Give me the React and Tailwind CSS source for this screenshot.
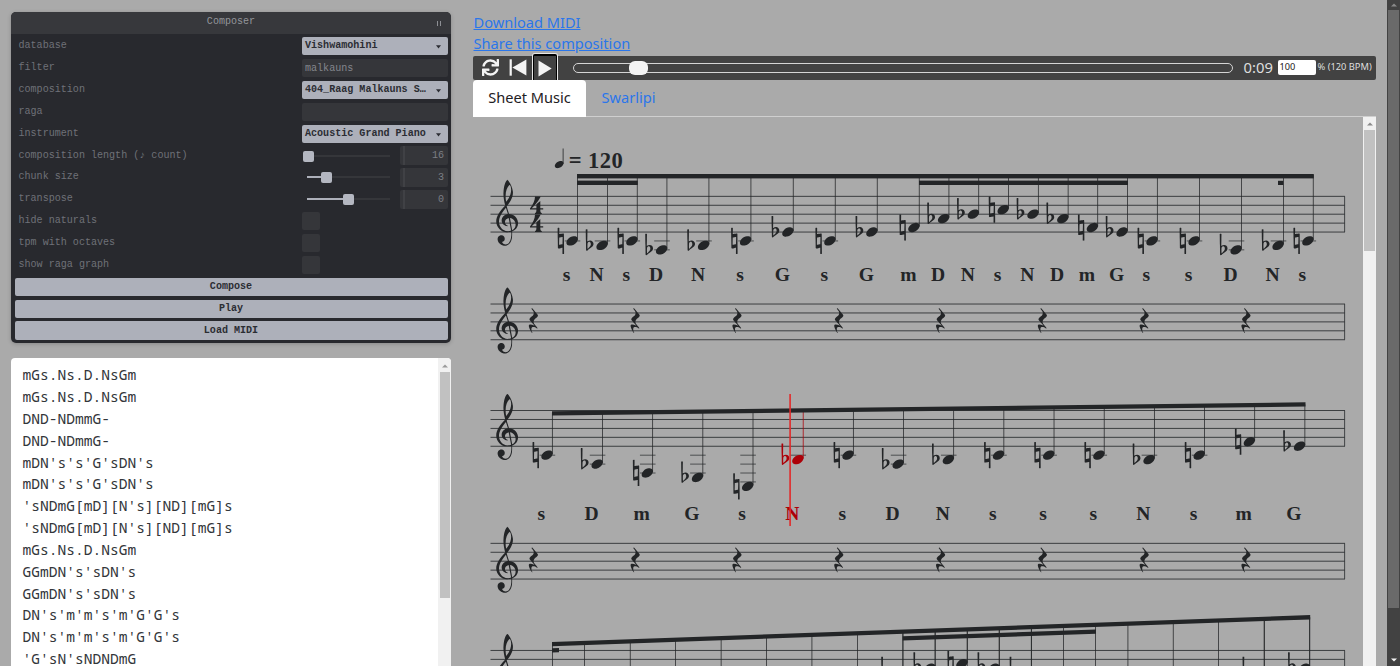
import React from 'react';
import { FaSync } from 'react-icons/fa';

const INK = '#232527';
const LINE = '#36393b';
const GAP = 8.93;

const CLEF =
  'M9.69 -37.41c0.09 -0.09 0.24 -0.06 0.36 0c0.12 0.09 0.57 0.6 0.96 1.11c1.77 2.34 3.21 5.85 3.57 8.73c0.21 1.56 0.03 3.27 -0.45 4.86c-0.69 2.31 -1.92 4.47 -4.23 7.44c-0.3 0.39 -0.57 0.72 -0.6 0.75c-0.03 0.06 0 0.15 0.18 0.78c0.54 1.68 1.38 4.44 1.68 5.49l0.09 0.42l0.39 0c1.47 0.09 2.76 0.51 3.96 1.29c1.83 1.23 3.06 3.21 3.39 5.52c0.09 0.45 0.12 1.29 0.06 1.74c-0.09 1.02 -0.33 1.83 -0.75 2.73c-0.84 1.71 -2.28 3.06 -4.02 3.72l-0.33 0.12l0.03 1.26c0 1.74 -0.06 3.63 -0.21 4.62c-0.45 3.06 -2.19 5.49 -4.47 6.21c-0.57 0.18 -0.9 0.21 -1.59 0.21c-0.69 0 -1.02 -0.03 -1.65 -0.21c-1.14 -0.27 -2.13 -0.84 -2.94 -1.65c-0.99 -0.99 -1.56 -2.16 -1.71 -3.54c-0.09 -0.81 0.06 -1.53 0.45 -2.13c0.63 -0.99 1.83 -1.56 3 -1.53c1.5 0.09 2.64 1.32 2.73 2.94c0.06 1.47 -0.93 2.7 -2.37 2.97' +
  'C6.5 18.8 8.5 18.9 10 18.2C12 17 13 14 13.2 11C13.3 10 13.3 8.5 13.2 7.5C11.5 8 8 8.1 5.5 7C2 5.3 0.2 1.8 0.2 -1.5C0.2 -6 3.5 -10.5 8 -15.3C7 -19 6.2 -23 6.5 -27C6.8 -32 8 -36 9.69 -37.41Z' +
  'M11.6 -33C8.9 -30.6 7.5 -25 8.8 -18.4C11.5 -21.5 13.2 -25.5 13.1 -28.9C13 -31.4 12.5 -33 11.6 -33Z' +
  'M8.6 -13.3C5.3 -9.4 2.6 -5 2.6 -1.2C2.6 3 5.8 6.8 10 7C11.2 7 12.3 6.8 13.1 6.5L10.95 -4.3C8.7 -3.7 7.5 -2 7.8 -0.3C8.2 1 9 1.9 10.3 2.4L9.9 2.8C7.3 2.4 5 0.5 4.9 -2C4.9 -5 7.1 -7.2 10.3 -7.8Z' +
  'M14 6.1C15.8 5.3 17 3.6 17 1.5C17 -1.5 15 -4.1 12.1 -4.4Z';
const HEAD =
  'M6.09 -4.05c0.36 -0.03 1.2 0 1.53 0.06c1.17 0.24 1.89 0.84 2.16 1.83c0.06 0.18 0.06 0.3 0.06 0.66c0 0.45 0 0.63 -0.15 1.08c-0.66 2.04 -3.06 3.93 -5.52 4.38c-0.54 0.09 -1.44 0.09 -1.83 0.03c-1.23 -0.27 -1.98 -0.87 -2.25 -1.86c-0.06 -0.18 -0.06 -0.3 -0.06 -0.66c0 -0.45 0 -0.63 0.15 -1.08c0.24 -0.78 0.75 -1.53 1.44 -2.22c1.2 -1.2 2.85 -2.01 4.47 -2.22z';
const REST =
  'M1.89 -11.82c0.12 -0.06 0.24 -0.06 0.36 -0.03c0.09 0.06 4.74 5.58 4.86 5.82c0.21 0.39 0.15 0.78 -0.15 1.26c-0.24 0.33 -0.72 0.81 -1.62 1.56c-0.45 0.36 -0.87 0.75 -0.96 0.84c-0.93 0.99 -1.14 2.49 -0.6 3.63c0.18 0.39 0.27 0.48 1.32 1.68c1.92 2.25 1.83 2.16 1.83 2.34c0 0.18 -0.18 0.36 -0.36 0.39c-0.15 0 -0.27 -0.06 -0.48 -0.27c-0.75 -0.75 -2.46 -1.29 -3.39 -1.08c-0.45 0.09 -0.69 0.27 -0.9 0.69c-0.12 0.3 -0.21 0.66 -0.24 1.14c-0.03 0.66 0.09 1.35 0.3 2.01c0.15 0.42 0.24 0.66 0.45 0.96c0.18 0.24 0.18 0.33 0.03 0.42c-0.12 0.06 -0.18 0.03 -0.45 -0.3c-1.08 -1.38 -2.07 -3.36 -2.4 -4.83c-0.27 -1.05 -0.15 -1.77 0.27 -2.07c0.21 -0.12 0.42 -0.15 0.87 -0.15c0.87 0.06 2.1 0.39 3.3 0.9l0.39 0.18l-1.65 -1.95c-2.52 -2.97 -2.61 -3.09 -2.7 -3.27c-0.09 -0.24 -0.12 -0.48 -0.03 -0.75c0.15 -0.48 0.57 -0.96 1.83 -2.01c0.45 -0.36 0.84 -0.72 0.93 -0.78c0.69 -0.75 1.02 -1.8 0.9 -2.79c-0.06 -0.33 -0.21 -0.84 -0.39 -1.11c-0.09 -0.15 -0.45 -0.6 -0.81 -1.05c-0.36 -0.42 -0.69 -0.81 -0.72 -0.87c-0.09 -0.18 0 -0.42 0.21 -0.51z';
const FLAT =
  'M-0.36 -14.07c0.33 -0.06 0.87 0 1.08 0.15c0.06 0.03 0.06 0.36 -0.03 5.25c-0.06 2.85 -0.09 5.19 -0.09 5.19c0 0.03 0.12 -0.03 0.24 -0.12c0.63 -0.42 1.41 -0.66 2.19 -0.72c0.81 -0.03 1.47 0.21 2.04 0.78c0.57 0.54 0.87 1.26 0.93 2.04c0.03 0.57 -0.09 1.08 -0.36 1.62c-0.42 0.81 -1.02 1.38 -2.82 2.61c-1.14 0.78 -1.44 1.02 -1.8 1.44c-0.18 0.18 -0.39 0.39 -0.45 0.42c-0.27 0.18 -0.57 0.15 -0.81 -0.06c-0.06 -0.09 -0.12 -0.18 -0.15 -0.27c-0.03 -0.06 -0.09 -3.27 -0.18 -8.34c-0.09 -4.53 -0.15 -8.58 -0.18 -9.03l0 -0.78l0.12 -0.06c0.06 -0.06 0.18 -0.09 0.27 -0.12zm3.18 11.01c-0.21 -0.12 -0.54 -0.15 -0.81 -0.06c-0.54 0.15 -0.99 0.63 -1.17 1.26c-0.06 0.3 -0.12 2.88 -0.06 3.87c0.03 0.42 0.03 0.81 0.06 0.9l0.03 0.12l0.45 -0.39c0.63 -0.54 1.26 -1.17 1.56 -1.59c0.3 -0.42 0.6 -0.99 0.72 -1.41c0.18 -0.69 0.09 -1.47 -0.18 -2.07c-0.15 -0.3 -0.33 -0.51 -0.6 -0.63z';
const NATURAL =
  'M0.2 -11.4c0.24 -0.06 0.78 0 0.99 0.15c0.03 0.03 0.03 0.48 0 2.61c-0.03 1.44 -0.03 2.61 -0.03 2.61c0 0.03 0.75 -0.09 1.68 -0.24c0.96 -0.18 1.71 -0.27 1.74 -0.27c0.15 0.03 0.27 0.15 0.36 0.3l0.06 0.12l0.09 8.67c0.09 6.96 0.12 8.67 0.09 8.67c-0.03 0.03 -0.12 0.06 -0.21 0.09c-0.24 0.09 -0.72 0.09 -0.96 0c-0.09 -0.03 -0.18 -0.06 -0.21 -0.09c-0.03 -0.03 -0.03 -0.48 0 -2.61c0.03 -1.44 0.03 -2.61 0.03 -2.61c0 -0.03 -0.75 0.09 -1.68 0.24c-0.96 0.18 -1.71 0.27 -1.74 0.27c-0.15 -0.03 -0.27 -0.15 -0.36 -0.3l-0.06 -0.15l-0.09 -7.53c-0.06 -4.14 -0.09 -8.04 -0.12 -8.67l0 -1.11l0.15 -0.06c0.09 -0.03 0.21 -0.06 0.27 -0.09zm3.75 8.4c0 -0.33 0 -0.42 -0.03 -0.42c-0.12 0 -2.79 0.45 -2.79 0.48c-0.03 0 -0.09 6.3 -0.09 6.33c0.03 0 2.79 -0.45 2.82 -0.48c0 0 0.09 -4.53 0.09 -5.91z';
const METER_FOUR =
  'M5 0L10.6 0L10.2 1C7.4 6 4.4 9 1.7 11.8L6.4 11.8L6.4 7.8L10.3 4.6L10.3 11.8L13.2 11.8L13.2 13L10.3 13C10.3 15.5 10.5 16.2 11.8 16.6L11.8 17.4L5 17.4L5 16.6C6.2 16.2 6.4 15.5 6.4 13L0 13L0 12C3 8 5 4 5 0Z';

// Steps are counted in half staff spaces downwards from the top line.
const PITCH = {
  C5: [3, 'n'], B4: [4, 'b'], A4: [5, 'b'], F4: [7, 'n'], E4: [8, 'b'],
  C4: [10, 'n'], B3: [11, 'b'], A3: [12, 'b'], F3: [14, 'n'], E3: [15, 'b'], C3: [17, 'n'],
};

function Staff({ top }) {
  return (
    <g>
      {[0, 1, 2, 3, 4].map((i) => (
        <rect key={i} x="490.5" y={top + i * GAP - 0.45} width="854.5" height="0.95" fill={LINE} />
      ))}
      <rect x="1344.2" y={top} width="0.9" height={GAP * 4} fill={LINE} />
      <path d={CLEF} fillRule="evenodd" fill={INK} transform={`translate(496 ${top + 3 * GAP}) scale(1.155)`} />
    </g>
  );
}

function Note({ x, top, pitch, beamY, label, labelY, color = INK }) {
  const [step, accidental] = PITCH[pitch];
  const y = top + (step * GAP) / 2;
  const ledgers = [];
  for (let s = 10; s <= step; s += 2) ledgers.push(top + (s * GAP) / 2);
  return (
    <g fill={color}>
      {ledgers.map((ly) => (
        <rect key={ly} x={x - 12.8} y={ly - 0.4} width="15.6" height="0.8" fill={LINE} />
      ))}
      <rect x={x - 0.45} y={beamY} width="0.75" height={y - beamY - 1} />
      <path d={HEAD} transform={`translate(${x - 11.1} ${y}) scale(1.155)`} />
      {accidental === 'b' ? (
        <path d={FLAT} transform={`translate(${x - 20.9} ${y}) scale(1.15 1.14)`} />
      ) : (
        <path d={NATURAL} transform={`translate(${x - 19.6} ${y}) scale(1.2 1.15)`} />
      )}
      {label && (
        <text x={x - 11} y={labelY} textAnchor="middle" fontSize="19.6" fontWeight="700" fontFamily="'Liberation Serif', serif">
          {label}
        </text>
      )}
    </g>
  );
}

const ROW_ONE = [
  [577.5, 'C4', 's'], [607.5, 'B3', 'N'], [637.3, 'C4', 's'], [667, 'A3', 'D'], [709, 'B3', 'N'], [751, 'C4', 's'],
  [793.3, 'E4', 'G'], [835.3, 'C4', 's'], [877.3, 'E4', 'G'], [919.3, 'F4', 'm'], [949, 'A4', 'D'], [978.8, 'B4', 'N'],
  [1008.6, 'C5', 's'], [1038.4, 'B4', 'N'], [1068.2, 'A4', 'D'], [1097.8, 'F4', 'm'], [1127.5, 'E4', 'G'],
  [1157.4, 'C4', 's'], [1199.5, 'C4', 's'], [1241.5, 'A3', 'D'], [1283.5, 'B3', 'N'], [1313.3, 'C4', 's'],
];
const ROW_THREE = [
  ['C4', 's'], ['A3', 'D'], ['F3', 'm'], ['E3', 'G'], ['C3', 's'], ['B3', 'N'], ['C4', 's'], ['A3', 'D'],
  ['B3', 'N'], ['C4', 's'], ['C4', 's'], ['C4', 's'], ['B3', 'N'], ['C4', 's'], ['F4', 'm'], ['E4', 'G'],
];
const ROW_FIVE_STEMS = [552.5, 584.7, 630.3, 675.7, 721.2, 766.6, 812, 857.5, 1063.7, 1095.7, 1128, 1173.3, 1218.7];
const ROW_FIVE_NOTES = [
  [903, 'A4'], [935.2, 'B4'], [967.3, 'C5'], [999.3, 'B4'], [1031.4, 'A4'], [1264.3, 'A4'], [1309.8, 'B4'],
];
const beamThree = (x) => 411.2 - (x - 552) * 0.0118;
const beamFive = (x) => 642 - (x - 552) * 0.0354;

function Rests({ y }) {
  return (
    <g fill={INK}>
      {[0, 1, 2, 3, 4, 5, 6, 7].map((i) => (
        <path key={i} d={REST} transform={`translate(${529.6 + i * 101.8} ${y}) scale(1.155)`} />
      ))}
    </g>
  );
}

function Score() {
  return (
    <svg className="block h-[549px] w-[890px] shrink-0" viewBox="473 117 890 549">
      <path d={HEAD} fill={INK} transform="translate(554.8 164.6) scale(0.88)" />
      <rect x="562.7" y="148.5" width="0.8" height="15.5" fill={INK} />
      <text x="568.8" y="168.2" fontSize="22.6" fontWeight="700" fill={INK} fontFamily="'Liberation Serif', serif" textLength="54" lengthAdjust="spacing">= 120</text>

      <Staff top={196.3} />
      <path d={METER_FOUR} fill={INK} transform="translate(530 196.5)" />
      <path d={METER_FOUR} fill={INK} transform="translate(530 214.5)" />
      {ROW_ONE.map(([x, pitch, label]) => (
        <Note key={x} x={x} top={196.3} pitch={pitch} label={label} beamY={175} labelY={280.5} />
      ))}
      <g fill={INK}>
        <rect x="577" y="174" width="736.8" height="4.4" />
        <rect x="577" y="180.6" width="60.8" height="4.4" />
        <rect x="919" y="180.6" width="209" height="4.4" />
        <rect x="1278" y="180.8" width="5.3" height="4.2" />
      </g>

      <Staff top={304} />
      <Rests y={322} />

      <Staff top={410.5} />
      {ROW_THREE.map(([pitch, label], i) => {
        const x = 552.4 + i * 50.17;
        return (
          <Note key={i} x={x} top={410.5} pitch={pitch} label={label} beamY={beamThree(x) + 2} labelY={519.7} color={i === 5 ? '#ac0008' : INK} />
        );
      })}
      <polygon points="552,411.2 1305.5,402.3 1305.5,406.5 552,415.4" fill={INK} />
      <rect x="789.3" y="394" width="1.6" height="132" fill="#e22a2a" />

      <Staff top={543.3} />
      <Rests y={561.3} />

      <Staff top={650.4} />
      {ROW_FIVE_STEMS.map((x) => (
        <rect key={x} x={x - 0.45} y={beamFive(x) + 2} width="0.75" height="60" fill={INK} />
      ))}
      {ROW_FIVE_NOTES.map(([x, pitch]) => (
        <g key={x}>
          <rect x={x - 0.45} y={beamFive(x) + 2} width="0.75" height="60" fill={INK} />
          <Note x={x} top={650.4} pitch={pitch} beamY={beamFive(x) + 2} />
        </g>
      ))}
      <g fill={INK}>
        <polygon points="552,642 1310.2,615.1 1310.2,619.4 552,646.3" />
        <polygon points="552,648.3 559,648 559,652.3 552,652.6" />
        <polygon points="902.7,636.2 1096,629.4 1096,633.7 902.7,640.5" />
      </g>
    </svg>
  );
}

function Row({ label, children }) {
  return (
    <div className="flex h-[18.3px] items-center justify-between pl-[7.5px] pr-[3.5px]">
      <span className="leading-[16px] text-[#6f7178]">{label}</span>
      <div className="flex h-full w-[146px] items-center">{children}</div>
    </div>
  );
}

function Select({ value }) {
  return (
    <div className="flex h-full w-full items-center justify-between rounded-[2px] bg-[#adb0ba] pl-[3.5px] pr-[6.5px] font-bold text-[#2b2d33]">
      <span className="leading-[16px]">{value}</span>
      <svg className="mt-[2px] h-[4px] w-[5px]" viewBox="0 0 5 4"><path d="M0 0.3H5L2.5 3.4Z" fill="#2b2d33" /></svg>
    </div>
  );
}

function Field({ value }) {
  return <div className="flex h-full w-full items-center rounded-[2px] bg-[#35363a] pl-[3.5px] text-[#84868d]">{value}</div>;
}

function Slider({ offset, value }) {
  return (
    <div className="flex h-full w-full items-center justify-between">
      <div className="flex w-[88px] items-center">
        <div className="h-[2px] bg-[#adb0ba]" style={{ width: Math.max(offset - 5, 0), marginLeft: offset > 5 ? 5 : offset }} />
        <div className="mt-px h-[11px] w-[11px] shrink-0 rounded-[2px] bg-[#b4b7c1]" />
        <div className="h-[2px] grow bg-[#35363a]" />
      </div>
      <div className="flex h-full w-[47.5px] items-center justify-between rounded-[2px] bg-[#35363a] pl-[3px] pr-[3.5px] text-[#7c7e85]">
        <span className="h-full w-[2px] bg-[#404145]" />
        <span>{value}</span>
      </div>
    </div>
  );
}

function Check() {
  return <div className="h-[18.3px] w-[18.3px] rounded-[2px] bg-[#35363a]" />;
}

function PanelButton({ children }) {
  return (
    <button className="mx-[3.5px] flex h-[18.3px] items-center justify-center rounded-[2px] bg-[#adb0ba] font-bold leading-[16px] text-[#2b2d33]">
      {children}
    </button>
  );
}

function Panel() {
  return (
    <section className="flex h-[331px] w-[440px] flex-col overflow-hidden rounded-[5px] bg-[#28292e] font-['Courier_10_Pitch','Liberation_Mono',monospace] text-[10.07px] shadow-[0_1px_4px_rgba(0,0,0,0.2)]">
      <header className="flex h-[21.8px] shrink-0 items-center bg-[#37383c] pb-[2px] text-[#94969b]">
        <span className="grow pl-[14px] text-center">Composer</span>
        <span className="mr-[10px] mt-[4px] flex gap-[2px]">
          <i className="h-[5px] w-px bg-[#8d8f94]" />
          <i className="h-[5px] w-px bg-[#8d8f94]" />
        </span>
      </header>
      <div className="flex flex-col gap-[3.59px] pt-[3.5px]">
        <Row label="database"><Select value="Vishwamohini" /></Row>
        <Row label="filter"><Field value="malkauns" /></Row>
        <Row label="composition"><Select value="404_Raag Malkauns S…" /></Row>
        <Row label="raga"><Field value="" /></Row>
        <Row label="instrument"><Select value="Acoustic Grand Piano" /></Row>
        <Row label="composition length (♪ count)"><Slider offset={1.3} value="16" /></Row>
        <Row label="chunk size"><Slider offset={19} value="3" /></Row>
        <Row label="transpose"><Slider offset={41.2} value="0" /></Row>
        <Row label="hide naturals"><Check /></Row>
        <Row label="tpm with octaves"><Check /></Row>
        <Row label="show raga graph"><Check /></Row>
        <PanelButton>Compose</PanelButton>
        <PanelButton>Play</PanelButton>
        <PanelButton>Load MIDI</PanelButton>
      </div>
    </section>
  );
}

const LINES = [
  'mGs.Ns.D.NsGm', 'mGs.Ns.D.NsGm', 'DND-NDmmG-', 'DND-NDmmG-', "mDN's's'G'sDN's", "mDN's's'G'sDN's",
  "'sNDmG[mD][N's][ND][mG]s", "'sNDmG[mD][N's][ND][mG]s", 'mGs.Ns.D.NsGm', "GGmDN's'sDN's", "GGmDN's'sDN's",
  "DN's'm'm's'm'G'G's", "DN's'm'm's'm'G'G's", "'G'sN'sNDNDmG",
];

function UpArrow({ fill }) {
  return <svg className="h-[4px] w-[6px]" viewBox="0 0 6 4"><path d="M3 0.4L6 3.6H0Z" fill={fill} /></svg>;
}

function Notation() {
  return (
    <section className="flex h-[308px] w-[440px] overflow-hidden rounded-t-[4px] bg-white">
      <div className="grow pl-[11.5px] pt-[6px] font-['Noto_Sans_Mono','DejaVu_Sans_Mono',monospace] text-[14.6px] leading-[21.85px] text-[#33363a]">
        {LINES.map((line, i) => (
          <div key={i} className="whitespace-pre">{line}</div>
        ))}
      </div>
      <div className="flex w-[13px] flex-col items-center bg-[#f1f1f1]">
        <div className="flex h-[13.5px] items-center pt-[2px]"><UpArrow fill="#9a9a9a" /></div>
        <div className="h-[226px] w-[10px] bg-[#c1c1c1]" />
      </div>
    </section>
  );
}

function Player() {
  return (
    <div className="flex h-[24px] w-[903px] items-center rounded-[2px] bg-[#424242] text-[#f4f4f4]">
      <div className="flex w-[28px] justify-center pl-[6px]"><FaSync className="h-[17px] w-[17px]" /></div>
      <svg className="ml-[8px] h-[17px] w-[18px]" viewBox="0 0 18 17">
        <rect x="0.6" y="0.3" width="2.2" height="16.4" fill="currentColor" />
        <path d="M17.4 0.4V16.6L3.4 8.5Z" fill="currentColor" />
      </svg>
      <div className="-mt-[3px] ml-[5px] flex h-[27px] w-[26px] items-center justify-center rounded-t-[3px] border border-b-0 border-[#e8e8e8]">
        <div className="flex h-full w-full items-center justify-center rounded-t-[2px] border-x border-t-2 border-black pt-[1px]">
          <svg className="h-[17px] w-[14px]" viewBox="0 0 14 17"><path d="M0.5 0.5V16.5L13.7 8.5Z" fill="currentColor" /></svg>
        </div>
      </div>
      <div className="ml-[15px] flex h-[10px] w-[660px] items-center rounded-full border-[1.5px] border-[#d4d4d4]">
        <div className="ml-[55px] h-[14px] w-[18.5px] shrink-0 rounded-[6px] bg-[#f4f4f4]" />
      </div>
      <span className="ml-[10.5px] w-[29px] pb-[2px] text-[14.8px] leading-[20px] text-[#dedede]">0:09</span>
      <span className="ml-[5px] flex h-[15.5px] w-[38px] items-center rounded-[2px] bg-white pb-px pl-[2px] text-[9.2px] text-[#222]">100</span>
      <span className="ml-[2px] whitespace-nowrap pb-px text-[9.3px] text-[#dedede]">% (120 BPM)</span>
    </div>
  );
}

export default function App() {
  return (
    <div className="flex h-[666px] w-[1400px] overflow-hidden bg-[#aaaaaa] font-['Noto_Sans',sans-serif]">
      <div className="flex w-[462px] shrink-0 flex-col gap-[15.5px] pl-[11px] pt-[11.8px]">
        <Panel />
        <Notation />
      </div>
      <main className="flex w-[925px] shrink-0 flex-col pl-[11px] pt-[11px]">
        <div className="flex h-[44.5px] flex-col items-start pl-[0.5px] pt-[0.5px] text-[14.6px] leading-[21.87px] text-[#2a76ea]">
          <a className="underline">Download MIDI</a>
          <a className="underline">Share this composition</a>
        </div>
        <Player />
        <nav className="relative flex h-[37.5px] w-[903px] shrink-0 border-b border-[#cfcfcf] text-[14.6px] leading-[22px]">
          <span className="-mb-px flex w-[113px] items-center justify-center rounded-t-[4px] bg-white pb-[2px] text-[#1e2023]">Sheet Music</span>
          <span className="flex items-center pb-px pl-[15.5px] text-[#2a76ea]">Swarlipi</span>
        </nav>
        <div className="flex w-[903px]">
          <Score />
          <div className="flex w-[13px] flex-col items-center bg-[#f1f1f1]">
            <div className="flex h-[13px] items-center"><UpArrow fill="#8a8a8a" /></div>
            <div className="h-[120.5px] w-[10.5px] bg-[#c1c1c1]" />
          </div>
        </div>
      </main>
      <aside className="flex w-[13px] flex-col items-center justify-between bg-[#424242]">
        <div className="flex flex-col items-center">
          <div className="flex h-[10px] items-center"><UpArrow fill="#8a8a8a" /></div>
          <div className="h-[598px] w-[10.5px] bg-[#6a6a6a]" />
        </div>
        <svg className="mb-[4px] h-[4px] w-[6px]" viewBox="0 0 6 4"><path d="M3 3.6L6 0.4H0Z" fill="#f4f4f4" /></svg>
      </aside>
    </div>
  );
}
